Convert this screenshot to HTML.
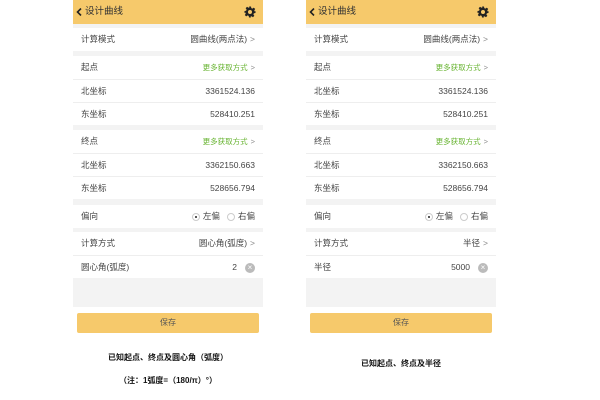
<!DOCTYPE html><html><head><meta charset="utf-8"><style>
*{margin:0;padding:0;box-sizing:border-box}
body{width:600px;height:400px;background:#fff;position:relative;font-family:"Liberation Sans","Noto Sans CJK SC",sans-serif;font-size:8.5px;color:#444;overflow:hidden}
.ph{position:absolute;top:0;width:190px;height:337px;background:#f3f3f3}
.hd{position:absolute;left:0;top:0;width:190px;height:24px;background:#f6c96b;color:#333;font-size:9.5px}
.hd .t{position:absolute;left:12px;top:0;line-height:24px}
.hd svg.c{position:absolute;left:3px;top:8px}
.r{position:absolute;left:0;width:190px;height:23px;background:#fff;line-height:23px;padding:0 8px}
.r .v{position:absolute;right:8px;top:0}
.ln{border-top:1px solid #eee}
.g{color:#6ab534;font-size:7.5px}
.ar{color:#888;margin-left:3px}
.btn{position:absolute;left:4px;top:313px;width:182px;height:20px;background:#f6c96b;border-radius:2px;text-align:center;line-height:20px;color:#555;font-size:8px}
.bot{position:absolute;left:0;top:307px;width:190px;height:30px;background:#fff}
.x{display:inline-block;width:10px;height:10px;border-radius:50%;background:#bbb;color:#fff;font-size:8px;line-height:10px;text-align:center;margin-left:8px;vertical-align:middle}
.rad{display:inline-block;width:8px;height:8px;border-radius:50%;border:1px solid #ccc;vertical-align:middle;margin-right:3px;position:relative}
.rad.on::after{content:"";position:absolute;left:2px;top:2px;width:2px;height:2px;border-radius:50%;background:#222}
.cap{position:absolute;font-weight:bold;color:#111;font-size:8px;text-align:center}
</style></head><body>

<div class="ph" style="left:73px">
<div class="hd"><svg class="c" width="6" height="8" viewBox="0 0 6 8"><path d="M5 0.5L1.5 4 5 7.5" stroke="#222" stroke-width="1.6" fill="none"/></svg><span class="t">设计曲线</span>
<svg style="position:absolute;left:171px;top:6px" width="12" height="12" viewBox="0 0 24 24"><path fill="#222" d="M10 1h4l.6 3.2 2.3 1 2.7-1.9 2.8 2.8-1.9 2.7 1 2.3L23 10v4l-3.2.6-1 2.3 1.9 2.7-2.8 2.8-2.7-1.9-2.3 1L14 23h-4l-.6-3.2-2.3-1-2.7 1.9-2.8-2.8 1.9-2.7-1-2.3L1 14v-4l3.2-.6 1-2.3-1.9-2.7 2.8-2.8 2.7 1.9 2.3-1zM12 8a4 4 0 100 8 4 4 0 000-8z"/></svg></div>
<div class="r" style="top:28px">计算模式<span class="v">圆曲线(两点法)<span class="ar">&gt;</span></span></div>
<div class="r" style="top:56px">起点<span class="v g">更多获取方式<span class="ar">&gt;</span></span></div>
<div class="r ln" style="top:79px">北坐标<span class="v">3361524.136</span></div>
<div class="r ln" style="top:102px">东坐标<span class="v">528410.251</span></div>
<div class="r" style="top:130px">终点<span class="v g">更多获取方式<span class="ar">&gt;</span></span></div>
<div class="r ln" style="top:153px">北坐标<span class="v">3362150.663</span></div>
<div class="r ln" style="top:176px">东坐标<span class="v">528656.794</span></div>
<div class="r" style="top:205px">偏向<span class="v"><span class="rad on"></span>左偏&nbsp;&nbsp;&nbsp;<span class="rad"></span>右偏</span></div>
<div class="r" style="top:232px">计算方式<span class="v">圆心角(弧度)<span class="ar">&gt;</span></span></div>
<div class="r ln" style="top:255px">圆心角(弧度)<span class="v">2<span class="x">×</span></span></div>
<div class="bot"></div>
<div class="btn">保存</div>
</div>

<div class="ph" style="left:306px">
<div class="hd"><svg class="c" width="6" height="8" viewBox="0 0 6 8"><path d="M5 0.5L1.5 4 5 7.5" stroke="#222" stroke-width="1.6" fill="none"/></svg><span class="t">设计曲线</span>
<svg style="position:absolute;left:171px;top:6px" width="12" height="12" viewBox="0 0 24 24"><path fill="#222" d="M10 1h4l.6 3.2 2.3 1 2.7-1.9 2.8 2.8-1.9 2.7 1 2.3L23 10v4l-3.2.6-1 2.3 1.9 2.7-2.8 2.8-2.7-1.9-2.3 1L14 23h-4l-.6-3.2-2.3-1-2.7 1.9-2.8-2.8 1.9-2.7-1-2.3L1 14v-4l3.2-.6 1-2.3-1.9-2.7 2.8-2.8 2.7 1.9 2.3-1zM12 8a4 4 0 100 8 4 4 0 000-8z"/></svg></div>
<div class="r" style="top:28px">计算模式<span class="v">圆曲线(两点法)<span class="ar">&gt;</span></span></div>
<div class="r" style="top:56px">起点<span class="v g">更多获取方式<span class="ar">&gt;</span></span></div>
<div class="r ln" style="top:79px">北坐标<span class="v">3361524.136</span></div>
<div class="r ln" style="top:102px">东坐标<span class="v">528410.251</span></div>
<div class="r" style="top:130px">终点<span class="v g">更多获取方式<span class="ar">&gt;</span></span></div>
<div class="r ln" style="top:153px">北坐标<span class="v">3362150.663</span></div>
<div class="r ln" style="top:176px">东坐标<span class="v">528656.794</span></div>
<div class="r" style="top:205px">偏向<span class="v"><span class="rad on"></span>左偏&nbsp;&nbsp;&nbsp;<span class="rad"></span>右偏</span></div>
<div class="r" style="top:232px">计算方式<span class="v">半径<span class="ar">&gt;</span></span></div>
<div class="r ln" style="top:255px">半径<span class="v">5000<span class="x">×</span></span></div>
<div class="bot"></div>
<div class="btn">保存</div>
</div>

<div class="cap" style="left:73px;width:190px;top:352px">已知起点、终点及圆心角（弧度）</div>
<div class="cap" style="left:73px;width:190px;top:375px">（注：1弧度=（180/π）°）</div>
<div class="cap" style="left:306px;width:190px;top:358px">已知起点、终点及半径</div>
</body></html>
